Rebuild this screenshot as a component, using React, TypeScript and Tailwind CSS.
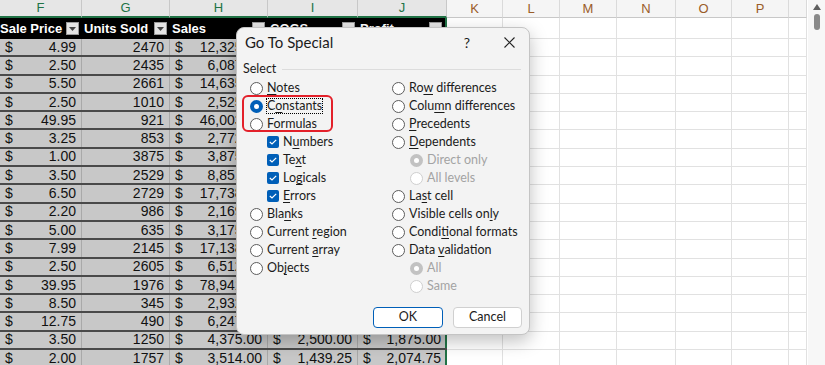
import React from 'react';

const COLS = [
  { key: 'F', w: 82, sel: true },
  { key: 'G', w: 88, sel: true },
  { key: 'H', w: 98, sel: true },
  { key: 'I', w: 90, sel: true },
  { key: 'J', w: 89, sel: true },
  { key: 'K', w: 56, sel: false },
  { key: 'L', w: 57, sel: false },
  { key: 'M', w: 57, sel: false },
  { key: 'N', w: 59, sel: false },
  { key: 'O', w: 56, sel: false },
  { key: 'P', w: 57, sel: false },
  { key: '', w: 18, sel: false },
];

const HEADERS = ['Sale Price', 'Units Sold', 'Sales', 'COGS', 'Profit'];

// price, units, sales, cogs, profit (cogs/profit left blank where the dialog hides them)
const ROWS: [string, string, string, string, string][] = [
  ['4.99', '2470', '12,325.30', '', ''],
  ['2.50', '2435', '6,087.50', '', ''],
  ['5.50', '2661', '14,635.50', '', ''],
  ['2.50', '1010', '2,525.00', '', ''],
  ['49.95', '921', '46,003.95', '', ''],
  ['3.25', '853', '2,772.25', '', ''],
  ['1.00', '3875', '3,875.00', '', ''],
  ['3.50', '2529', '8,851.50', '', ''],
  ['6.50', '2729', '17,738.50', '', ''],
  ['2.20', '986', '2,169.20', '', ''],
  ['5.00', '635', '3,175.00', '', ''],
  ['7.99', '2145', '17,138.55', '', ''],
  ['2.50', '2605', '6,512.50', '', ''],
  ['39.95', '1976', '78,941.20', '', ''],
  ['8.50', '345', '2,932.50', '', ''],
  ['12.75', '490', '6,247.50', '', ''],
  ['3.50', '1250', '4,375.00', '2,500.00', '1,875.00'],
  ['2.00', '1757', '3,514.00', '1,439.25', '2,074.75'],
];

function Dropdown() {
  return (
    <span className="absolute right-[3px] top-[4px] w-[13px] h-[13px] bg-[#e4e4e4] border border-[#9a9a9a] flex items-center justify-center">
      <svg width="7" height="4" viewBox="0 0 7 4">
        <path d="M0 0 L7 0 L3.5 4 Z" fill="#444" />
      </svg>
    </span>
  );
}

function Radio({ checked, disabled }: { checked?: boolean; disabled?: boolean }) {
  if (checked) {
    return (
      <span
        className={`w-[13px] h-[13px] rounded-full flex items-center justify-center shrink-0 ${
          disabled ? 'bg-[#c2c2c2]' : 'bg-[#005fb8]'
        }`}
      >
        <span className="w-[5px] h-[5px] rounded-full bg-white" />
      </span>
    );
  }
  return (
    <span
      className={`w-[13px] h-[13px] rounded-full border shrink-0 bg-white ${
        disabled ? 'border-[#cfcfcf]' : 'border-[#5c5c5c]'
      }`}
    />
  );
}

function Check() {
  return (
    <span className="w-[12px] h-[12px] rounded-[2px] bg-[#005fb8] flex items-center justify-center shrink-0">
      <svg width="8" height="6" viewBox="0 0 8 6">
        <path d="M0.8 3 L3 5 L7.2 0.8" stroke="white" strokeWidth="1.2" fill="none" />
      </svg>
    </span>
  );
}

// label with one underlined access-key letter
function Label({ text, u, disabled, focus }: { text: string; u?: number; disabled?: boolean; focus?: boolean }) {
  const body =
    u === undefined ? (
      text
    ) : (
      <>
        {text.slice(0, u)}
        <span className="underline underline-offset-2">{text[u]}</span>
        {text.slice(u + 1)}
      </>
    );
  return (
    <span
      className={`${disabled ? 'text-[#a3a3a3]' : 'text-[#1b1b1b]'} ${
        focus ? 'outline outline-1 outline-dotted outline-black' : ''
      } leading-[14px]`}
    >
      {body}
    </span>
  );
}

function Opt({
  text,
  u,
  checked,
  disabled,
  indent,
  box,
  focus,
}: {
  text: string;
  u?: number;
  checked?: boolean;
  disabled?: boolean;
  indent?: boolean;
  box?: boolean;
  focus?: boolean;
}) {
  return (
    <div className={`h-[18px] flex items-center gap-[4px] ${indent ? (box ? 'pl-[17px]' : 'pl-[18px]') : ''}`}>
      {box ? <Check /> : <Radio checked={checked} disabled={disabled} />}
      <Label text={text} u={u} disabled={disabled} focus={focus} />
    </div>
  );
}

function Dialog() {
  return (
    <div
      className="absolute left-[236px] top-[27px] w-[294px] h-[308px] bg-[#f3f3f3] border border-[#c4c4c4] rounded-[8px] shadow-[0_6px_18px_rgba(0,0,0,0.25)] text-[12.5px]"
      style={{ fontFamily: 'Lato, "Noto Sans", sans-serif' }}
    >
      <div className="h-[28px] flex items-center pl-[8px] pr-[14px] text-[#1b1b1b]">
        <span className="text-[15px]">Go To Special</span>
        <span className="ml-auto mr-[34px] text-[14px]">?</span>
        <svg width="11" height="11" viewBox="0 0 11 11">
          <path d="M0.5 0.5 L10.5 10.5 M10.5 0.5 L0.5 10.5" stroke="#222" strokeWidth="1.1" />
        </svg>
      </div>
      <div className="flex items-center pl-[6px] pr-[8px] h-[20px] mt-[3px]">
        <span className="text-[#1b1b1b]">Select</span>
        <span className="flex-1 h-px bg-[#dcdcdc] ml-[6px]" />
      </div>
      <div className="flex pl-[13px]">
        <div className="w-[142px] flex flex-col">
          <Opt text="Notes" u={0} />
          <Opt text="Constants" u={1} checked focus />
          <Opt text="Formulas" u={0} />
          <Opt text="Numbers" u={1} box indent />
          <Opt text="Text" u={2} box indent />
          <Opt text="Logicals" u={2} box indent />
          <Opt text="Errors" u={0} box indent />
          <Opt text="Blanks" u={3} />
          <Opt text="Current region" u={8} />
          <Opt text="Current array" u={8} />
          <Opt text="Objects" u={2} />
        </div>
        <div className="flex flex-col">
          <Opt text="Row differences" u={2} />
          <Opt text="Column differences" u={4} />
          <Opt text="Precedents" u={0} />
          <Opt text="Dependents" u={0} />
          <Opt text="Direct only" checked disabled indent />
          <Opt text="All levels" disabled indent />
          <Opt text="Last cell" u={2} />
          <Opt text="Visible cells only" u={16} />
          <Opt text="Conditional formats" u={5} />
          <Opt text="Data validation" u={5} />
          <Opt text="All" checked disabled indent />
          <Opt text="Same" disabled indent />
        </div>
      </div>
      <div className="flex justify-end gap-[10px] pr-[7px] mt-[12px]">
        <button className="w-[70px] h-[21px] bg-white border border-[#005fb8] rounded-[4px] text-[#1b1b1b] text-[12.5px]">
          OK
        </button>
        <button className="w-[69px] h-[21px] bg-white border border-[#d0d0d0] rounded-[4px] text-[#1b1b1b] text-[12.5px]">
          Cancel
        </button>
      </div>
    </div>
  );
}

function DataCell({
  w,
  money,
  value,
  last,
  clip,
}: {
  w: number;
  money: boolean;
  value: string;
  last?: boolean;
  clip?: number;
}) {
  const inner = (
    <div className="h-full flex items-center px-[5px] shrink-0" style={{ width: w - 1 }}>
      {money && value && <span>$</span>}
      <span className="ml-auto">{value}</span>
    </div>
  );
  return (
    <div
      className={`h-full flex border-r ${last ? 'border-r-2 border-r-[#217346]' : 'border-r-[#a9a9a9]'}`}
      style={{ width: w }}
    >
      {clip ? (
        <div className="h-full overflow-hidden" style={{ width: clip }}>
          {inner}
        </div>
      ) : (
        inner
      )}
    </div>
  );
}

function BlankCells() {
  return (
    <>
      {COLS.filter((c) => !c.sel).map((c, i) => (
        <div key={i} className="h-full border-r border-b border-[#e1e1e1] bg-white" style={{ width: c.w }} />
      ))}
    </>
  );
}

export default function App() {
  return (
    <div
      className="relative w-[825px] h-[365px] overflow-hidden bg-white flex"
      style={{ fontFamily: '"Liberation Sans", Arial, sans-serif' }}
    >
      <div className="w-[808px] flex flex-col">
        {/* column letters */}
        <div className="flex h-[18px] shrink-0 text-[13px]">
          {COLS.map((c, i) => (
            <div
              key={i}
              className={`h-full flex items-center justify-center border-r ${
                c.sel
                  ? 'bg-[#e6e6e6] text-[#217346] border-r-[#c8c8c8] border-b-2 border-b-[#217346]'
                  : 'bg-[#f5f5f5] text-[#9a5c28] border-r-[#dadada] border-b border-b-[#c8c8c8]'
              }`}
              style={{ width: c.w }}
            >
              {c.key}
            </div>
          ))}
        </div>
        {/* table header */}
        <div className="flex h-[21px] shrink-0 text-[13px] font-bold">
          {HEADERS.map((h, i) => (
            <div
              key={h}
              className={`relative h-full bg-black text-white flex items-center ${i === 0 ? 'pl-0' : 'pl-[2px]'} ${
                i === 4 ? 'border-r-2 border-r-[#217346]' : ''
              }`}
              style={{ width: COLS[i].w }}
            >
              {h}
              <Dropdown />
            </div>
          ))}
          <BlankCells />
        </div>
        {/* data */}
        {ROWS.map((r, ri) => (
          <div key={ri} className="flex h-[18.3px] shrink-0 text-[14px] text-[#111]">
            <div className="flex h-full bg-[#c8c8c8] border-b-2 border-b-[#4a4a4a]">
              <DataCell w={COLS[0].w} money value={r[0]} />
              <DataCell w={COLS[1].w} money={false} value={r[1]} />
              <DataCell w={COLS[2].w} money value={r[2]} clip={ri < 16 ? 66 : undefined} />
              <DataCell w={COLS[3].w} money value={r[3]} />
              <DataCell w={COLS[4].w} money value={r[4]} last />
            </div>
            <BlankCells />
          </div>
        ))}
      </div>
      {/* vertical scrollbar */}
      <div className="w-[17px] h-full bg-[#f7f7f7] flex flex-col items-center pt-[4px]">
        <svg width="8" height="6" viewBox="0 0 8 6">
          <path d="M4 0 L8 6 L0 6 Z" fill="#606060" />
        </svg>
        <div className="w-[6px] h-[16px] rounded-full bg-[#8a8a8a] mt-[4px]" />
      </div>
      <Dialog />
      {/* annotation highlight */}
      <div className="absolute left-[242px] top-[95px] w-[91px] h-[37px] border-2 border-[#e3202a] rounded-[6px]" />
    </div>
  );
}
